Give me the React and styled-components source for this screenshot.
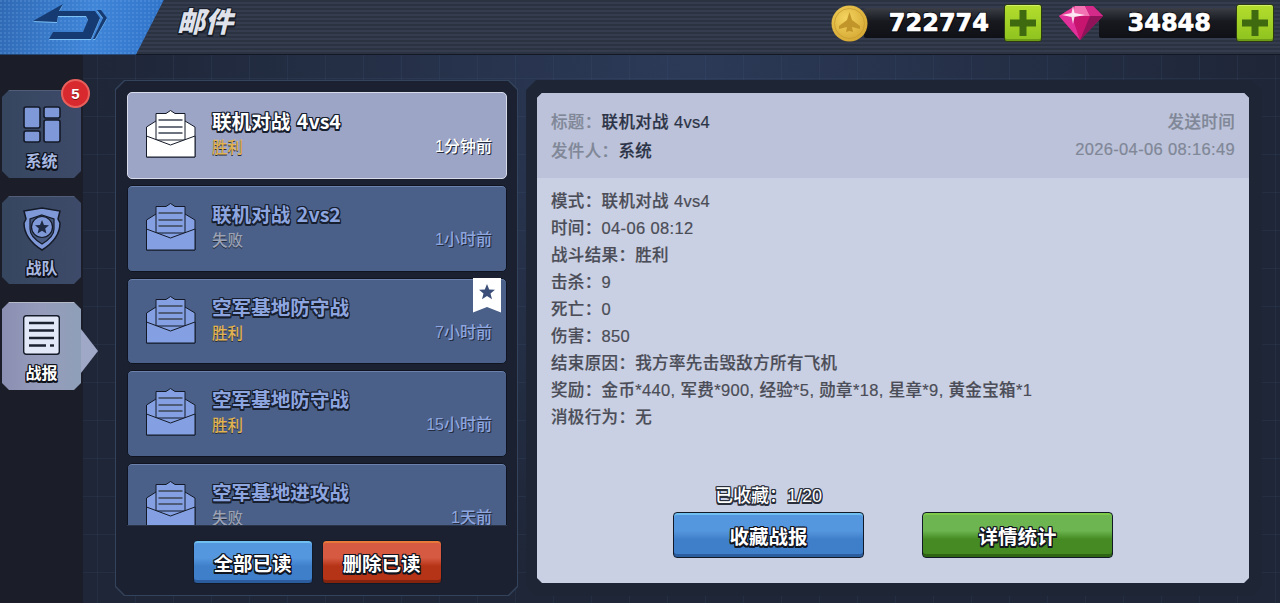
import React from "react";
import styled, { createGlobalStyle, css } from "styled-components";

const GlobalStyle = createGlobalStyle`
  html, body { margin: 0; padding: 0; height: 100%; background: #1b1f2b; overflow: hidden; }
  * { box-sizing: border-box; }
  body { font-family: "Liberation Sans", "Noto Sans CJK SC", sans-serif; }
`;

const outline = (c = "#10141f") => css`
  text-shadow: -1px 0 0 ${c}, 1px 0 0 ${c}, 0 -1px 0 ${c}, 0 1px 0 ${c},
    -1px -1px 0 ${c}, 1px -1px 0 ${c}, -1px 1px 0 ${c}, 1px 1px 0 ${c},
    0 2px 0 ${c}, 1px 2px 0 ${c}, -1px 2px 0 ${c};
`;

const chamfer = (n) => `polygon(${n}px 0, calc(100% - ${n}px) 0, 100% ${n}px, 100% calc(100% - ${n}px), calc(100% - ${n}px) 100%, ${n}px 100%, 0 calc(100% - ${n}px), 0 ${n}px)`;

const Page = styled.div`
  width: 1280px;
  height: 603px;
  display: flex;
  flex-direction: column;
  overflow: hidden;
`;

/* ---------- top bar ---------- */
const TopBar = styled.header`
  height: 55px;
  flex: none;
  display: flex;
  align-items: center;
  position: relative;
  background: repeating-linear-gradient(180deg, #2b3242 0 2px, #353c4d 2px 4px);
  border-bottom: 1px solid #141824;
`;

const BackButton = styled.button`
  width: 164px;
  height: 55px;
  flex: none;
  border: 0;
  padding: 0 0 0 32px;
  display: flex;
  align-items: flex-start;
  clip-path: polygon(0 0, 100% 0, 136px 100%, 0 100%);
  background:
    radial-gradient(circle at 1px 1px, rgba(130, 180, 240, 0.22) 1px, transparent 1.4px) 0 0 / 4px 4px,
    linear-gradient(100deg, #2f69b4 0%, #3f85d8 55%, #2f73c9 100%);
`;

const Title = styled.h1`
  margin: 0 0 15px 13px;
  font: italic 900 28px/36px "Noto Sans CJK SC", sans-serif;
  color: #dfe2ea;
  ${outline("#1a1e29")}
`;

const Wallet = styled.div`
  margin: 0 0 8px auto;
  display: flex;
  align-items: center;
  padding-right: 6px;
`;

const Currency = styled.div`
  display: flex;
  align-items: center;
  width: ${(p) => p.$width}px;
  margin-left: ${(p) => p.$gap}px;
`;

const Amount = styled.div`
  flex: 1;
  height: 30px;
  margin: 0 -2px 0 -4px;
  background: linear-gradient(180deg, #3b3e46 0%, #17191f 45%, #0f1116 100%);
  border-radius: 2px;
  padding-right: ${(p) => p.$pad}px;
  text-align: right;
  font: 700 24px/31px "DejaVu Sans", sans-serif;
  color: #fff;
  -webkit-text-stroke: 0.7px #fff;
  ${outline("#0c0d12")}
`;

const PlusButton = styled.button`
  width: 38px;
  height: 38px;
  flex: none;
  position: relative;
  z-index: 1;
  padding: 0;
  border: 1px solid #2b3a12;
  border-radius: 3px;
  background: linear-gradient(180deg, #b4de2e 0%, #8ec21f 100%);
  box-shadow: inset 0 1px 0 #d4ef66, inset 0 -2px 0 #6f9c16;
  display: flex;
  align-items: center;
  justify-content: center;
`;

/* ---------- body ---------- */
const Content = styled.div`
  flex: 1;
  display: flex;
  min-height: 0;
`;

const Sidebar = styled.nav`
  width: 83px;
  flex: none;
  padding: 35px 0 0 2px;
  background: #1b1e29;
  display: flex;
  flex-direction: column;
  gap: 18px;
`;

const Tab = styled.div`
  width: 79px;
  height: 88px;
  position: relative;
  display: flex;
  flex-direction: column;
  align-items: center;
  padding-top: ${(p) => p.$top}px;
  font: 700 16px/20px "Noto Sans CJK SC", sans-serif;
  color: ${(p) => (p.$active ? "#fff" : "#a9b9e2")};
  ${outline("#0f121a")}
`;

const TabFace = styled.div`
  position: absolute;
  inset: 0;
  z-index: 0;
  clip-path: ${chamfer(7)};
  background: ${(p) =>
    p.$active
      ? "linear-gradient(90deg, #8b8fb2 0%, #959cbb 50%, #8f9fb8 100%)"
      : "linear-gradient(90deg, #36465f 0%, #3d4a69 100%)"};
  border-top: 1px solid ${(p) => (p.$active ? "#b6bac8" : "#525e78")};
`;

const TabIcon = styled.svg`
  position: relative;
  display: block;
  margin-bottom: ${(p) => p.$gap}px;
`;

const TabLabel = styled.span`
  position: relative;
`;

const Badge = styled.div`
  position: absolute;
  z-index: 2;
  top: -11px;
  right: -9px;
  width: 29px;
  height: 29px;
  border-radius: 50%;
  border: 2px solid #e8605c;
  background: #d8292f;
  color: #fff;
  text-align: center;
  font: 700 15px/25px "Liberation Sans", sans-serif;
  text-shadow: 0 1px 0 #7a1215;
`;

const TabPointer = styled.div`
  position: absolute;
  z-index: 1;
  top: 27px;
  right: -17px;
  width: 17px;
  height: 44px;
  background: #a0a8c8;
  clip-path: polygon(0 0, 100% 50%, 0 100%);
`;

const Stage = styled.main`
  flex: 1;
  display: flex;
  gap: 8px;
  padding: 25px 18px 7px 32px;
  background:
    linear-gradient(90deg, rgba(64, 84, 116, 0.2) 1px, transparent 1px) 14px 0 / 38px 38px,
    linear-gradient(180deg, rgba(64, 84, 116, 0.2) 1px, transparent 1px) 0 23px / 38px 38px,
    radial-gradient(ellipse at 50% 0%, #2c3a58 0%, #1e2637 70%);
`;

const ListFrame = styled.section`
  width: 403px;
  flex: none;
  padding: 1px;
  clip-path: ${chamfer(9)};
  background: #34435c;
`;

const ListPanel = styled.div`
  height: 100%;
  clip-path: ${chamfer(9)};
  background: #1b2131;
  display: flex;
  flex-direction: column;
  padding: 11px 10px 0 11px;
`;

const MailList = styled.div`
  height: 433px;
  flex: none;
  overflow: hidden;
  display: flex;
  flex-direction: column;
  gap: 6px;
`;

const MailRow = styled.article`
  height: 86.75px;
  flex: none;
  position: relative;
  display: grid;
  grid-template-columns: 84px 1fr auto;
  grid-template-rows: 30px 21px;
  align-content: start;
  padding: 13px 14px 0 0;
  border-radius: 5px;
  border: 1px solid ${(p) => (p.$active ? "#d8dcea" : "#0f1420")};
  background: ${(p) => (p.$active ? "#9ca5c6" : "#4b6088")};
  box-shadow: ${(p) => (p.$active ? "none" : "inset 0 1px 0 #6c82ac")};
`;

const MailIcon = styled.svg`
  grid-row: 1 / 3;
  margin: 4px 0 0 18px;
  overflow: visible;
`;

const MailTitle = styled.div`
  grid-column: 2 / 4;
  font: 700 19.6px/30px "Noto Sans CJK SC", sans-serif;
  word-spacing: 2px;
  color: ${(p) => (p.$active ? "#fff" : "#8ea6e0")};
  ${outline("#18202f")}
`;

const MailResult = styled.div`
  font: 500 15.5px/21px "Noto Sans CJK SC", sans-serif;
  color: ${(p) => (p.$win ? "#e2b451" : "#9ba3b5")};
  text-shadow: 0 1px 0 #232b3d;
`;

const MailTime = styled.div`
  font: 500 16px/21px "Liberation Sans", "Noto Sans CJK SC", sans-serif;
  color: ${(p) => (p.$active ? "#fff" : "#8ea6e0")};
  text-shadow: 1px 1px 0 #232b3d;
`;

const Bookmark = styled.div`
  position: absolute;
  top: -1px;
  right: 5px;
  width: 28px;
  height: 35px;
  background: #fff;
  clip-path: polygon(0 0, 100% 0, 100% 100%, 50% 84%, 0 100%);
  display: flex;
  justify-content: center;
  padding-top: 6px;
`;

const ListFooter = styled.div`
  flex: 1;
  display: flex;
  justify-content: center;
  gap: 9px;
  padding-top: 14px;
  border-top: 1px solid #2a3548;
`;

const tones = {
  blue: { top: "#5597df", bottom: "#3f7fca", edge: "#6fc0f0", low: "#2a5c9e" },
  red: { top: "#d65a42", bottom: "#b53316", edge: "#e8793a", low: "#85240e" },
  green: { top: "#6cb550", bottom: "#458a22", edge: "#7ecb4a", low: "#2e6414" },
};

const GameButton = styled.button`
  width: ${(p) => p.$w}px;
  height: ${(p) => p.$h}px;
  padding: 0;
  border: 1px solid #121a28;
  border-radius: 4px;
  background: linear-gradient(180deg, ${(p) => tones[p.$tone].top} 0%, ${(p) => tones[p.$tone].top} 40%, ${(p) => tones[p.$tone].bottom} 60%);
  box-shadow: inset 0 2px 0 ${(p) => tones[p.$tone].edge}, inset 0 -3px 0 ${(p) => tones[p.$tone].low};
  color: #fff;
  font: 700 19.5px "Noto Sans CJK SC", sans-serif;
  ${outline("#10141f")}
`;

const DetailFrame = styled.section`
  flex: 1;
  clip-path: ${chamfer(10)};
  background: #1e2636;
  padding: 13px 13px 13px 11px;
`;

const Sheet = styled.div`
  height: 100%;
  display: flex;
  flex-direction: column;
  clip-path: ${chamfer(5)};
  background: #cad0e3;
`;

const SheetHead = styled.div`
  height: 85px;
  flex: none;
  padding: 13px 14px 0;
  background: #bcc2d9;
  display: grid;
  grid-template-columns: 1fr auto;
  grid-auto-rows: 29px;
  align-items: center;
  font: 500 16.5px "Liberation Sans", "Noto Sans CJK SC", sans-serif;
  letter-spacing: 0.35px;
  -webkit-text-stroke: 0.2px;
  color: #808797;
`;

const HeadValue = styled.span`
  color: #2b3346;
`;

const HeadRight = styled.span`
  text-align: right;
`;

const SheetBody = styled.div`
  flex: 1;
  display: flex;
  flex-direction: column;
  padding: 10px 14px 25px;
`;

const Line = styled.div`
  font: 500 16.5px/27px "Liberation Sans", "Noto Sans CJK SC", sans-serif;
  letter-spacing: 0.35px;
  -webkit-text-stroke: 0.2px;
  color: #4a4d57;
`;

const Actions = styled.div`
  margin-top: auto;
  display: grid;
  grid-template-columns: 190px 190px;
  justify-content: center;
  column-gap: 59px;
`;

const ActionSlot = styled.div`
  display: flex;
  flex-direction: column;
  justify-content: flex-end;
  align-items: center;
`;

const SavedCount = styled.div`
  font: 500 18px/22px "Liberation Sans", "Noto Sans CJK SC", sans-serif;
  color: #fff;
  margin-bottom: 5px;
  ${outline("#2a2f3c")}
`;

/* ---------- drawings ---------- */
const BackArrow = () => {
  const arrow = "M1 21 31 4 27 11H63L68 18 59 39H17L21 32H51L56 20 54 16H26L25 22Z";
  const chevron = "M65 10H69L75 18 63 39H61L71 18Z";
  return (
    <svg width="80" height="45" viewBox="0 0 80 45">
      <path d={arrow} fill="#7cc0f4" transform="translate(0 1)" />
      <path d={chevron} fill="#7cc0f4" transform="translate(0 1)" />
      <path d={arrow} fill="#163b72" />
      <path d={chevron} fill="#163b72" />
    </svg>
  );
};

const Coin = () => (
  <svg width="37" height="37" viewBox="0 0 37 37" style={{ flex: "none", position: "relative", zIndex: 1 }}>
    <defs>
      <radialGradient id="coinFill" cx="40%" cy="35%" r="70%">
        <stop offset="0%" stopColor="#f4d45f" />
        <stop offset="100%" stopColor="#d4a632" />
      </radialGradient>
    </defs>
    <circle cx="18.5" cy="18.5" r="18" fill="url(#coinFill)" />
    <circle cx="18.5" cy="18.5" r="15" fill="none" stroke="#c79c2e" strokeWidth="0.8" />
    <path d="M18.5 7 21 15 29 21 29 24 21 22 22 27 18.5 26 15 27 16 22 8 24 8 21 16 15Z" fill="#c2952a" />
  </svg>
);

const Gem = () => (
  <svg width="44" height="35" viewBox="0 0 44 35" style={{ flex: "none", position: "relative", zIndex: 1 }}>
    <path d="M16 0H34L44 10 21 34 0 10Z" fill="#c8187a" />
    <path d="M16 0 0 10H13Z" fill="#e83d98" />
    <path d="M16 0 13 10H31L26 0Z" fill="#f272b4" />
    <path d="M26 0H34L44 10H31Z" fill="#d42a8a" />
    <path d="M0 10 21 34 13 10Z" fill="#e0309a" />
    <path d="M13 10 21 34 31 10Z" fill="#c7146f" />
    <path d="M31 10 21 34 44 10Z" fill="#8e1358" />
    <path d="M14 0 15.5 7 26 9 15.5 11 14 18 12.5 11 3 9 12.5 7Z" fill="#fff" opacity="0.85" />
  </svg>
);

const Plus = () => (
  <svg width="26" height="26" viewBox="0 0 26 26">
    <path d="M9.5 0H16.5V9.5H26V16.5H16.5V26H9.5V16.5H0V9.5H9.5Z" fill="#3f6a0f" />
  </svg>
);

const Envelope = ({ active }) => {
  const fill = active ? "#fff" : "#84a0e2";
  const ink = "#141a28";
  return (
    <MailIcon width="50" height="48" viewBox="0 0 50 48">
      <path d="M.5 17 10 11H39L49 17V47H.5Z" fill={fill} stroke={ink} />
      <path d="M10 30V3.5H20L24.5 .5 29 3.5H39V30Z" fill={fill} stroke={ink} />
      <path d="M12.5 10H36.5M12.5 17H36.5M12.5 23H36.5" stroke="#3c4556" strokeWidth="1.5" fill="none" />
      <path d="M.5 26 24.5 35 49 26V47H.5Z" fill={fill} stroke={ink} />
    </MailIcon>
  );
};

const GridIcon = () => (
  <TabIcon $gap={7} width="38" height="37" viewBox="0 0 38 37">
    <g fill="#7f98d8" stroke="#141a28" strokeWidth="1.6">
      <rect x="1" y="1" width="16" height="21" rx="2" />
      <rect x="21" y="1" width="16" height="11" rx="2" />
      <rect x="21" y="14" width="16" height="22" rx="2" />
      <rect x="1" y="25" width="16" height="11" rx="2" />
    </g>
  </TabIcon>
);

const ShieldIcon = () => (
  <TabIcon $gap={6} width="40" height="44" viewBox="0 0 40 44">
    <path d="M2 4 20 1 38 4 36 12 38 16C38 30 28 38 20 43 12 38 2 30 2 16L4 12Z" fill="#7f98d8" stroke="#141a28" strokeWidth="1.5" />
    <path d="M20 8 32 12V22C32 29 25 34 20 37 15 34 8 29 8 22V12Z" fill="#47597f" stroke="#141a28" strokeWidth="1.2" />
    <circle cx="20" cy="20" r="10.5" fill="#7f98d8" stroke="#141a28" strokeWidth="1.2" />
    <path d="M20 13 22 18 27 18.3 23.2 21.6 24.4 26.5 20 23.8 15.6 26.5 16.8 21.6 13 18.3 18 18Z" fill="#1f2a44" />
  </TabIcon>
);

const ReportIcon = () => (
  <TabIcon $gap={7} width="37" height="40" viewBox="0 0 37 40">
    <rect x="0.7" y="0.7" width="35.6" height="38.6" rx="2.5" fill="#e3e8f8" stroke="#141a28" strokeWidth="1.4" />
    <path d="M6 8H31M6 15.5H31M6 23H31M6 30.5H23" stroke="#1d2230" strokeWidth="2.4" />
    <rect x="27" y="29.3" width="4" height="2.4" fill="#1d2230" />
  </TabIcon>
);

const mails = [
  { title: "联机对战 4vs4", result: "胜利", win: true, time: "1分钟前", active: true },
  { title: "联机对战 2vs2", result: "失败", time: "1小时前" },
  { title: "空军基地防守战", result: "胜利", win: true, time: "7小时前", saved: true },
  { title: "空军基地防守战", result: "胜利", win: true, time: "15小时前" },
  { title: "空军基地进攻战", result: "失败", time: "1天前" },
];

const lines = [
  "模式\uFF1A联机对战 4vs4",
  "时间\uFF1A04-06 08:12",
  "战斗结果\uFF1A胜利",
  "击杀\uFF1A9",
  "死亡\uFF1A0",
  "伤害\uFF1A850",
  "结束原因\uFF1A我方率先击毁敌方所有飞机",
  "奖励\uFF1A金币*440, 军费*900, 经验*5, 勋章*18, 星章*9, 黄金宝箱*1",
  "消极行为\uFF1A无",
];

export default function App() {
  return (
    <Page>
      <GlobalStyle />
      <TopBar>
        <BackButton>
          <BackArrow />
        </BackButton>
        <Title>邮件</Title>
        <Wallet>
          <Currency $width={211}>
            <Coin />
            <Amount $pad={17}>722774</Amount>
            <PlusButton><Plus /></PlusButton>
          </Currency>
          <Currency $width={215} $gap={17}>
            <Gem />
            <Amount $pad={27}>34848</Amount>
            <PlusButton><Plus /></PlusButton>
          </Currency>
        </Wallet>
      </TopBar>
      <Content>
        <Sidebar>
          <Tab $top={16}>
            <TabFace />
            <Badge>5</Badge>
            <GridIcon />
            <TabLabel>系统</TabLabel>
          </Tab>
          <Tab $top={11}>
            <TabFace />
            <ShieldIcon />
            <TabLabel>战队</TabLabel>
          </Tab>
          <Tab $active $top={13}>
            <TabFace $active />
            <TabPointer />
            <ReportIcon />
            <TabLabel>战报</TabLabel>
          </Tab>
        </Sidebar>
        <Stage>
          <ListFrame>
            <ListPanel>
              <MailList>
                {mails.map((m, i) => (
                  <MailRow key={i} $active={m.active}>
                    <Envelope active={m.active} />
                    <MailTitle $active={m.active}>{m.title}</MailTitle>
                    <MailResult $win={m.win}>{m.result}</MailResult>
                    <MailTime $active={m.active}>{m.time}</MailTime>
                    {m.saved && (
                      <Bookmark>
                        <svg width="16" height="16" viewBox="0 0 16 16">
                          <path d="M8 0 10.2 5.4 16 5.8 11.5 9.5 13 15.2 8 12 3 15.2 4.5 9.5 0 5.8 5.8 5.4Z" fill="#3c4f78" />
                        </svg>
                      </Bookmark>
                    )}
                  </MailRow>
                ))}
              </MailList>
              <ListFooter>
                <GameButton $tone="blue" $w={120} $h={44}>全部已读</GameButton>
                <GameButton $tone="red" $w={120} $h={44}>删除已读</GameButton>
              </ListFooter>
            </ListPanel>
          </ListFrame>
          <DetailFrame>
            <Sheet>
              <SheetHead>
                <span>标题{"\uFF1A"}<HeadValue>联机对战 4vs4</HeadValue></span>
                <HeadRight>发送时间</HeadRight>
                <span>发件人{"\uFF1A"}<HeadValue>系统</HeadValue></span>
                <HeadRight>2026-04-06 08:16:49</HeadRight>
              </SheetHead>
              <SheetBody>
                {lines.map((l) => (
                  <Line key={l}>{l}</Line>
                ))}
                <Actions>
                  <ActionSlot>
                    <SavedCount>已收藏{"\uFF1A"}1/20</SavedCount>
                    <GameButton $tone="blue" $w={191} $h={46}>收藏战报</GameButton>
                  </ActionSlot>
                  <ActionSlot>
                    <GameButton $tone="green" $w={191} $h={46}>详情统计</GameButton>
                  </ActionSlot>
                </Actions>
              </SheetBody>
            </Sheet>
          </DetailFrame>
        </Stage>
      </Content>
    </Page>
  );
}
